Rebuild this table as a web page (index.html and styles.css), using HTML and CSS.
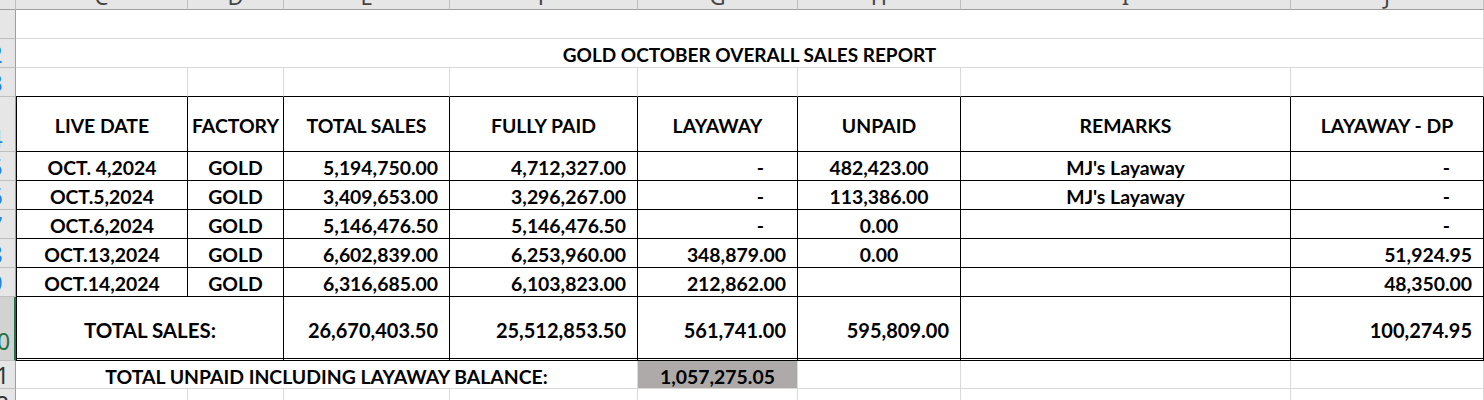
FILE: index.html
```html
<!DOCTYPE html>
<html>
<head>
<meta charset="utf-8">
<link rel="stylesheet" href="styles.css">
</head>
<body>
<div class="sheet">
  <!-- column header row -->
  <div class="corner"></div>
  <div class="ch"><span>C</span></div>
  <div class="ch"><span>D</span></div>
  <div class="ch"><span>E</span></div>
  <div class="ch"><span>F</span></div>
  <div class="ch"><span>G</span></div>
  <div class="ch"><span>H</span></div>
  <div class="ch"><span>I</span></div>
  <div class="ch"><span>J</span></div>

  <!-- row 1 -->
  <div class="rh"><span>1</span></div>
  <div class="c span8"></div>

  <!-- row 2 -->
  <div class="rh blue"><span>2</span></div>
  <div class="c span8 ctr title">GOLD OCTOBER OVERALL SALES REPORT</div>

  <!-- row 3 -->
  <div class="rh blue"><span>3</span></div>
  <div class="c bb"></div>
  <div class="c bb"></div>
  <div class="c bb"></div>
  <div class="c bb"></div>
  <div class="c bb"></div>
  <div class="c bb"></div>
  <div class="c bb"></div>
  <div class="c bb"></div>

  <!-- row 4 header -->
  <div class="rh blue"><span>4</span></div>
  <div class="c t tl ctr">LIVE DATE</div>
  <div class="c t ctr">FACTORY</div>
  <div class="c t ctr">TOTAL SALES</div>
  <div class="c t ctr">FULLY PAID</div>
  <div class="c t ctr">LAYAWAY</div>
  <div class="c t ctr">UNPAID</div>
  <div class="c t ctr">REMARKS</div>
  <div class="c t ctr">LAYAWAY - DP</div>

  <!-- row 5 -->
  <div class="rh blue"><span>5</span></div>
  <div class="c t tl ctr">OCT. 4,2024</div>
  <div class="c t ctr">GOLD</div>
  <div class="c t num">5,194,750.00</div>
  <div class="c t num">4,712,327.00</div>
  <div class="c t dash">-</div>
  <div class="c t ctr">482,423.00</div>
  <div class="c t ctr">MJ's Layaway</div>
  <div class="c t dash">-</div>

  <!-- row 6 -->
  <div class="rh blue"><span>6</span></div>
  <div class="c t tl ctr">OCT.5,2024</div>
  <div class="c t ctr">GOLD</div>
  <div class="c t num">3,409,653.00</div>
  <div class="c t num">3,296,267.00</div>
  <div class="c t dash">-</div>
  <div class="c t ctr">113,386.00</div>
  <div class="c t ctr">MJ's Layaway</div>
  <div class="c t dash">-</div>

  <!-- row 7 -->
  <div class="rh blue"><span>7</span></div>
  <div class="c t tl ctr">OCT.6,2024</div>
  <div class="c t ctr">GOLD</div>
  <div class="c t num">5,146,476.50</div>
  <div class="c t num">5,146,476.50</div>
  <div class="c t dash">-</div>
  <div class="c t ctr">0.00</div>
  <div class="c t ctr"></div>
  <div class="c t dash">-</div>

  <!-- row 8 -->
  <div class="rh blue"><span>8</span></div>
  <div class="c t tl ctr">OCT.13,2024</div>
  <div class="c t ctr">GOLD</div>
  <div class="c t num">6,602,839.00</div>
  <div class="c t num">6,253,960.00</div>
  <div class="c t num">348,879.00</div>
  <div class="c t ctr">0.00</div>
  <div class="c t ctr"></div>
  <div class="c t num">51,924.95</div>

  <!-- row 9 -->
  <div class="rh blue"><span>9</span></div>
  <div class="c t tl ctr">OCT.14,2024</div>
  <div class="c t ctr">GOLD</div>
  <div class="c t num">6,316,685.00</div>
  <div class="c t num">6,103,823.00</div>
  <div class="c t num">212,862.00</div>
  <div class="c t ctr"></div>
  <div class="c t ctr"></div>
  <div class="c t num">48,350.00</div>

  <!-- row 10 totals -->
  <div class="rh sel"><span>10</span></div>
  <div class="c t tl tot label span2 ctr">TOTAL SALES:</div>
  <div class="c t tot num">26,670,403.50</div>
  <div class="c t tot num">25,512,853.50</div>
  <div class="c t tot num">561,741.00</div>
  <div class="c t tot num">595,809.00</div>
  <div class="c t tot"></div>
  <div class="c t tot num">100,274.95</div>

  <!-- row 11 -->
  <div class="rh dark"><span>11</span></div>
  <div class="c span4 ctr">TOTAL UNPAID INCLUDING LAYAWAY BALANCE:</div>
  <div class="c ctr fill">1,057,275.05</div>
  <div class="c"></div>
  <div class="c"></div>
  <div class="c"></div>

  <!-- row 12 -->
  <div class="rh dark"><span>12</span></div>
  <div class="c"></div>
  <div class="c"></div>
  <div class="c"></div>
  <div class="c"></div>
  <div class="c"></div>
  <div class="c"></div>
  <div class="c"></div>
  <div class="c"></div>
</div>
</body>
</html>
```

FILE: styles.css
```css
html, body {
  margin: 0;
  padding: 0;
  background: #ffffff;
  overflow: hidden;
}

.sheet {
  display: grid;
  grid-template-columns: 16px 172px 96px 166px 188px 160px 163px 330px 193px;
  grid-template-rows: 10px 29px 29px 29px 55px 29px 29px 29px 29px 29px 64px 28px 29px;
  width: 1484px;
  font-family: Lato, "Liberation Sans", sans-serif;
  font-weight: 700;
  font-size: 19.4px;
  color: #000;
}

.corner,
.ch {
  box-sizing: border-box;
  background: #e6e6e6;
  border-right: 1px solid #bfbfbf;
  border-bottom: 1px solid #9e9e9e;
  overflow: hidden;
  display: flex;
  align-items: flex-end;
  justify-content: center;
}

.ch span {
  font-family: "Noto Sans", "Open Sans", sans-serif;
  font-weight: 400;
  font-size: 22px;
  line-height: 22px;
  color: #444444;
  margin-bottom: 2px;
  flex: none;
}

.rh {
  box-sizing: border-box;
  background: #e6e6e6;
  border-right: 1px solid #9e9e9e;
  border-bottom: 1px solid #bfbfbf;
  overflow: hidden;
  display: flex;
  align-items: flex-end;
}

.rh span {
  flex: none;
  width: 30px;
  margin-left: -19px;
  text-align: center;
  font-family: "Noto Sans", "Open Sans", sans-serif;
  font-weight: 400;
  font-size: 23px;
  line-height: 20px;
  margin-bottom: 3px;
  color: #444444;
}

.rh.blue span { color: #2f80d8; }
.rh.dark span { color: #333333; }
.rh.sel {
  background: #d2d2d2;
  border-right: 2px solid #217346;
}
.rh.sel span {
  color: #217346;
  margin-left: -18px;
  margin-bottom: 9px;
}

.c {
  box-sizing: border-box;
  border-right: 1px solid #d9d9d9;
  border-bottom: 1px solid #d9d9d9;
  display: flex;
  align-items: center;
  padding-top: 3px;
  white-space: nowrap;
  overflow: hidden;
  min-width: 0;
}

.span8 { grid-column: span 8; }
.span4 { grid-column: span 4; }
.span2 { grid-column: span 2; }

.ctr { justify-content: center; }
.num { justify-content: flex-end; padding-right: 11px; }
.dash { justify-content: flex-end; padding-right: 33px; }

.bb { border-bottom-color: #000; }

.t {
  border-right-color: #000;
  border-bottom-color: #000;
}
.tl { border-left: 1px solid #000; }

.tot {
  font-size: 20px;
  border-bottom: 3px double #000;
  padding-top: 4px;
}
.tot.label { font-size: 20.5px; }

.fill { background: #aeaaaa; }

.title { font-size: 19px; }
```
